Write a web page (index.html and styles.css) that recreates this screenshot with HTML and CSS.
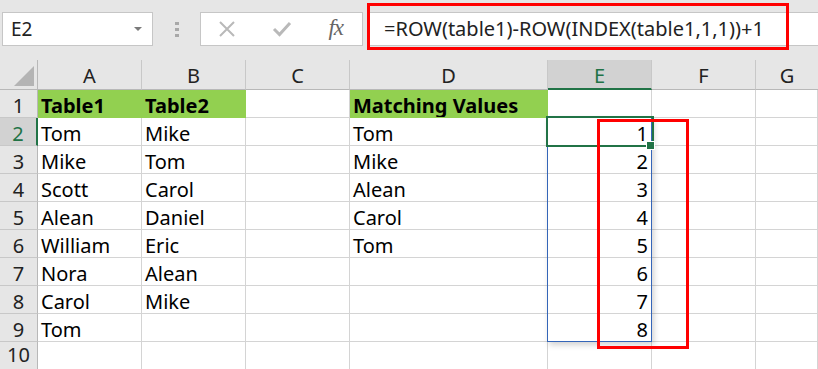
FILE: index.html
```html
<!DOCTYPE html>
<html lang="en">
<head>
    <meta charset="UTF-8">
    <title>Matching Values</title>
    <link rel="stylesheet" href="styles.css">
</head>
<body>
    <div class="toolbar">
        <div class="namebox">
            <span>E2</span>
            <span class="caret"></span>
        </div>
        <div class="dots"><i></i><i></i><i></i></div>
        <div class="fxbox">
            <svg class="icon" width="18" height="18" viewBox="0 0 18 18">
                <path d="M2 2 L16 16 M16 2 L2 16" stroke="#b9b9b9" stroke-width="2" fill="none"/>
            </svg>
            <svg class="icon" width="20" height="16" viewBox="0 0 20 16">
                <path d="M2 8 L7.5 13.5 L18 2" stroke="#b9b9b9" stroke-width="3" fill="none"/>
            </svg>
            <span class="fx">fx</span>
        </div>
        <div class="formula">=ROW(table1)-ROW(INDEX(table1,1,1))+1</div>
        <div class="mark mark-formula"></div>
    </div>

    <div class="sheet">
        <div class="hd corner"><span class="tri"></span></div>
        <div class="hd">A</div>
        <div class="hd">B</div>
        <div class="hd">C</div>
        <div class="hd">D</div>
        <div class="hd active-col">E</div>
        <div class="hd">F</div>
        <div class="hd last">G</div>

        <div class="rh">1</div>
        <div class="c fill bold">Table1</div>
        <div class="c fill bold">Table2</div>
        <div class="c"></div>
        <div class="c fill bold">Matching Values</div>
        <div class="c"></div><div class="c"></div><div class="c"></div>

        <div class="rh active-row">2</div>
        <div class="c">Tom</div><div class="c">Mike</div><div class="c"></div><div class="c">Tom</div>
        <div class="c num">1</div><div class="c"></div><div class="c"></div>

        <div class="rh">3</div>
        <div class="c">Mike</div><div class="c">Tom</div><div class="c"></div><div class="c">Mike</div>
        <div class="c num">2</div><div class="c"></div><div class="c"></div>

        <div class="rh">4</div>
        <div class="c">Scott</div><div class="c">Carol</div><div class="c"></div><div class="c">Alean</div>
        <div class="c num">3</div><div class="c"></div><div class="c"></div>

        <div class="rh">5</div>
        <div class="c">Alean</div><div class="c">Daniel</div><div class="c"></div><div class="c">Carol</div>
        <div class="c num">4</div><div class="c"></div><div class="c"></div>

        <div class="rh">6</div>
        <div class="c">William</div><div class="c">Eric</div><div class="c"></div><div class="c">Tom</div>
        <div class="c num">5</div><div class="c"></div><div class="c"></div>

        <div class="rh">7</div>
        <div class="c">Nora</div><div class="c">Alean</div><div class="c"></div><div class="c"></div>
        <div class="c num">6</div><div class="c"></div><div class="c"></div>

        <div class="rh">8</div>
        <div class="c">Carol</div><div class="c">Mike</div><div class="c"></div><div class="c"></div>
        <div class="c num">7</div><div class="c"></div><div class="c"></div>

        <div class="rh">9</div>
        <div class="c">Tom</div><div class="c"></div><div class="c"></div><div class="c"></div>
        <div class="c num">8</div><div class="c"></div><div class="c"></div>

        <div class="rh last-row">10</div>
        <div class="c"></div><div class="c"></div><div class="c"></div><div class="c"></div>
        <div class="c"></div><div class="c"></div><div class="c"></div>

        <!-- overlays -->
        <div class="spill"></div>
        <div class="selection"></div>
        <div class="handle"></div>
        <div class="mark mark-range"></div>
    </div>
</body>
</html>
```

FILE: styles.css
```css
body { margin: 0; width: 818px; height: 369px; overflow: hidden; background: #fff; font-family: "Noto Sans", "Liberation Sans", sans-serif; color: #000; }

/* formula bar */
.toolbar { position: relative; height: 60px; background: #e6e6e6; display: flex; align-items: flex-start; padding-top: 12px; box-sizing: border-box; }
.namebox { margin-left: 2px; width: 151px; height: 34px; box-sizing: border-box; background: #fff; border: 1px solid #c6c6c6; display: flex; align-items: center; justify-content: space-between; padding: 0 10px 0 8px; font-size: 19px; color: #222; }
.caret { width: 0; height: 0; border-left: 4px solid transparent; border-right: 4px solid transparent; border-top: 4px solid #7a7a7a; }
.dots { width: 47px; height: 34px; display: flex; flex-direction: column; align-items: center; justify-content: center; gap: 3px; }
.dots i { width: 4px; height: 3px; background: #a8a8a8; }
.fxbox { width: 163px; height: 34px; box-sizing: border-box; background: #fff; border: 1px solid #c6c6c6; display: flex; align-items: center; padding: 0 19px 0 17px; justify-content: space-between; }
.fx { font-family: "Liberation Serif", serif; font-style: italic; font-size: 23px; color: #666; letter-spacing: -1px; margin-top: -3px; }
.formula { flex: 1; margin-left: 4px; height: 34px; box-sizing: border-box; background: #fff; border: 1px solid #c6c6c6; border-right: none; padding-left: 16px; font-size: 20px; line-height: 31px; color: #222; white-space: nowrap; }

.mark { position: absolute; border: 3px solid #ff0000; box-sizing: border-box; }
.mark-formula { left: 367px; top: 3px; width: 422px; height: 47px; }

/* grid */
.sheet { position: relative; display: grid; grid-template-columns: 38px 104px 104px 104px 198px 104px 104px 1fr; grid-template-rows: 30px repeat(10, 28px); font-size: 20px; }
.hd { background: #e6e6e6; border-right: 1px solid #c8c8c8; border-bottom: 1px solid #b8b8b8; box-sizing: border-box; text-align: center; line-height: 32px; color: #222; }
.hd.last { border-right: none; }
.corner { position: relative; border-right-color: #b8b8b8; }
.tri { position: absolute; right: 3px; bottom: 3px; width: 0; height: 0; border-left: 20px solid transparent; border-bottom: 20px solid #b4b4b4; }
.active-col { background: #d2d2d2; color: #217346; border-bottom: 2px solid #217346; }
.rh { background: #e6e6e6; border-right: 1px solid #b8b8b8; border-bottom: 1px solid #c8c8c8; box-sizing: border-box; text-align: center; padding-top: 4px; line-height: 24px; color: #222; }
.rh.last-row { padding-top: 1px; }
.active-row { background: #d2d2d2; color: #217346; border-right: 2px solid #217346; }
.c { border-right: 1px solid #d4d4d4; border-bottom: 1px solid #d4d4d4; box-sizing: border-box; padding: 4px 3px 0; line-height: 24px; white-space: nowrap; overflow: hidden; }
.fill { background: #92d050; border-color: #92d050; }
.bold { font-weight: bold; }
.num { text-align: right; }

.spill { position: absolute; left: 547px; top: 57px; width: 105px; height: 225px; box-sizing: border-box; border: 1px solid #3465b8; box-shadow: 2px 3px 6px rgba(0, 0, 0, 0.18); }
.selection { position: absolute; left: 546px; top: 56px; width: 108px; height: 31px; box-sizing: border-box; border: 2px solid #217346; }
.handle { position: absolute; left: 646px; top: 81px; width: 7px; height: 7px; background: #217346; border: 1px solid #fff; }
.mark-range { left: 597px; top: 59px; width: 92px; height: 230px; }
```
